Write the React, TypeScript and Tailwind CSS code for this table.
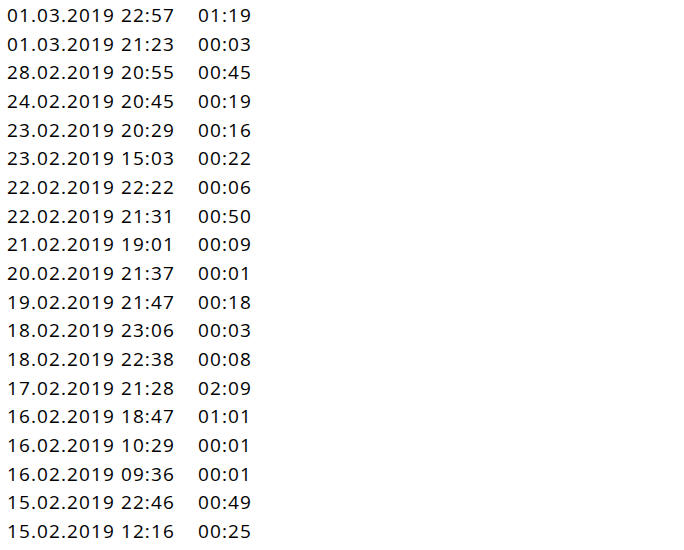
const rows: [string, string][] = [
  ['01.03.2019 22:57', '01:19'],
  ['01.03.2019 21:23', '00:03'],
  ['28.02.2019 20:55', '00:45'],
  ['24.02.2019 20:45', '00:19'],
  ['23.02.2019 20:29', '00:16'],
  ['23.02.2019 15:03', '00:22'],
  ['22.02.2019 22:22', '00:06'],
  ['22.02.2019 21:31', '00:50'],
  ['21.02.2019 19:01', '00:09'],
  ['20.02.2019 21:37', '00:01'],
  ['19.02.2019 21:47', '00:18'],
  ['18.02.2019 23:06', '00:03'],
  ['18.02.2019 22:38', '00:08'],
  ['17.02.2019 21:28', '02:09'],
  ['16.02.2019 18:47', '01:01'],
  ['16.02.2019 10:29', '00:01'],
  ['16.02.2019 09:36', '00:01'],
  ['15.02.2019 22:46', '00:49'],
  ['15.02.2019 12:16', '00:25'],
]

export default function App() {
  return (
    <div className="w-[684px] h-[550px] overflow-hidden bg-white text-black font-['Open_Sans',sans-serif] text-[19px] tracking-[1.1px]">
      <div className="pl-[7px] pt-px">
        {rows.map(([date, dur]) => (
          <div key={date + dur} className="grid grid-cols-[191px_auto] leading-[28.67px] h-[28.67px]">
            <span>{date}</span>
            <span>{dur}</span>
          </div>
        ))}
      </div>
    </div>
  )
}
